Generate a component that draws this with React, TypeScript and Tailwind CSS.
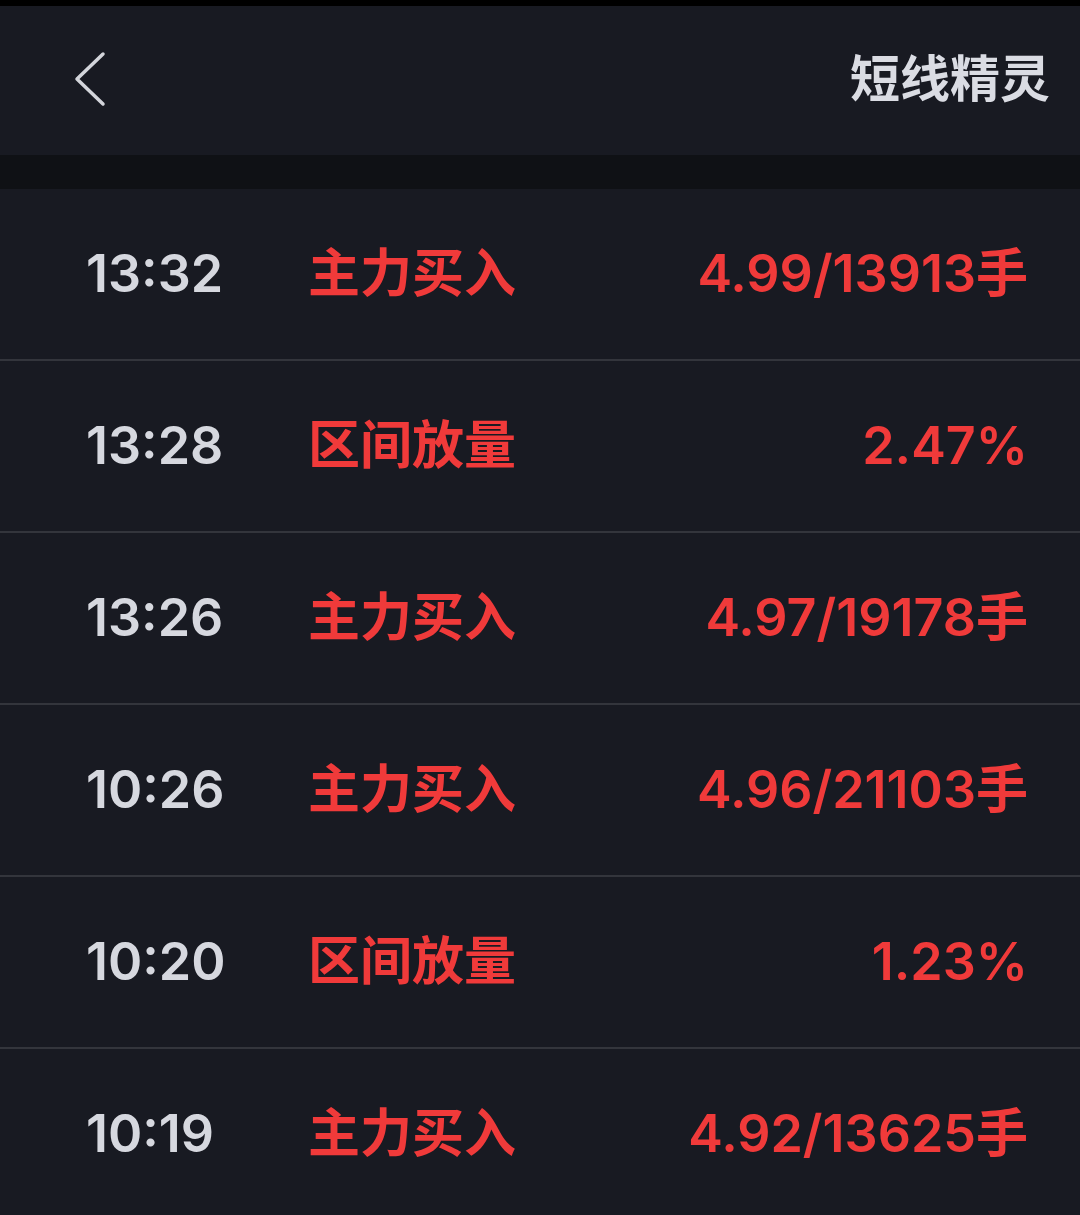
const rows = [
  { time: "13:32", kind: "主力买入", value: "4.99/13913手" },
  { time: "13:28", kind: "区间放量", value: "2.47%" },
  { time: "13:26", kind: "主力买入", value: "4.97/19178手" },
  { time: "10:26", kind: "主力买入", value: "4.96/21103手" },
  { time: "10:20", kind: "区间放量", value: "1.23%" },
  { time: "10:19", kind: "主力买入", value: "4.92/13625手" },
]

const font = { fontFamily: 'Inter, "Noto Sans CJK SC", sans-serif' }

export default function App() {
  return (
    <div className="w-[1080px] h-[1215px] overflow-hidden bg-[#181a22]" style={font}>
      <div className="h-[6px] bg-black" />
      <header className="h-[149px] flex items-center justify-between pl-[72px] pr-[30px] bg-[#181a22]">
        <svg width="38" height="60" viewBox="0 0 38 60" className="-mt-[3px]">
          <path d="M31 5 L5 30 L31 55" fill="none" stroke="#d3d5db" strokeWidth="3.5" strokeLinecap="round" strokeLinejoin="round" />
        </svg>
        <h1 className="text-[50px] font-bold text-[#dadce3] -mt-[2px]">短线精灵</h1>
      </header>
      <div className="h-[34px] bg-[#0f1115]" />
      <ul>
        {rows.map((r, i) => (
          <li
            key={i}
            className="h-[172px] flex items-center border-b-2 border-[#33353c] pl-[86px] pr-[52px]"
          >
            <span className="w-[222px] text-[52px] font-semibold text-[#d6d8df]">{r.time}</span>
            <span className="text-[52px] font-bold text-[#f03a3a]">{r.kind}</span>
            <span className="ml-auto text-[52px] font-semibold text-[#f03a3a]">{r.value}</span>
          </li>
        ))}
      </ul>
    </div>
  )
}
